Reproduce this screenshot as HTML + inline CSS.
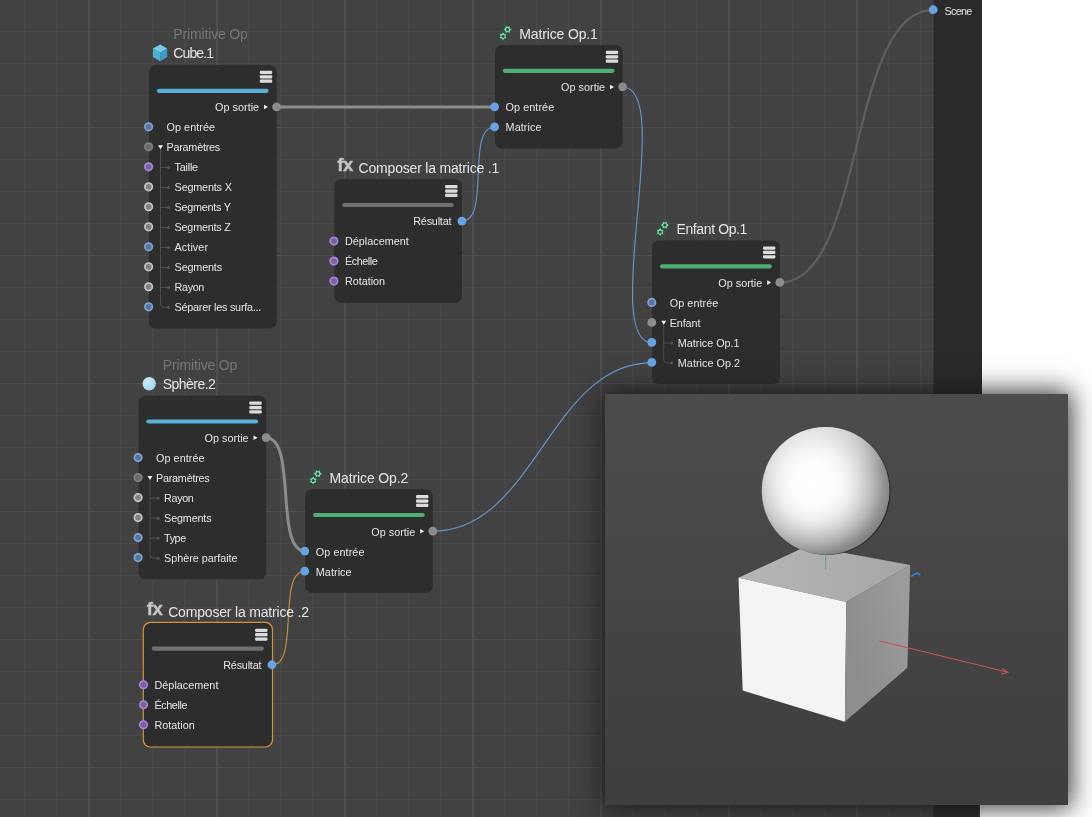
<!DOCTYPE html>
<html lang="fr"><head><meta charset="utf-8"><title>Éditeur de nœuds</title>
<style>
html,body{margin:0;padding:0;background:#fff;}
body{width:1092px;height:817px;position:relative;overflow:hidden;font-family:"Liberation Sans",sans-serif;}
#ed{position:absolute;left:0;top:0;width:940px;height:817px;background-color:#424242;
 background-image:linear-gradient(to right,#4f4f4f 2px,transparent 2px),linear-gradient(to bottom,#505050 1px,#474747 1px,#474747 1.5px,transparent 1.5px),linear-gradient(to right,#484848 2px,transparent 2px),linear-gradient(to bottom,#494949 1px,#444444 1px,#444444 1.5px,transparent 1.5px);
 background-size:128px 128px,128px 128px,32px 32px,32px 32px;background-position:88px 0,0 127px,24px 0,0 31px;}
#tx{position:absolute;left:0;top:0;width:1092px;height:817px;will-change:transform;}
.t{position:absolute;white-space:nowrap;line-height:20px;height:20px;}
svg.ov{position:absolute;left:0;top:0;pointer-events:none;}
#vp{position:absolute;left:605px;top:394px;width:463px;height:411px;
 background:linear-gradient(to bottom,#4c4c4c,#3e3e3e);box-shadow:0 0 24px 3px rgba(20,20,20,0.85);}
</style></head><body>
<div id="ed"></div>
<svg class="ov" width="1092" height="817" viewBox="0 0 1092 817"><defs><radialGradient id="sph" cx="0.4" cy="0.35" r="0.7"><stop offset="0" stop-color="#c9ecf7"/><stop offset="1" stop-color="#9fd6ea"/></radialGradient></defs><rect x="933.6" y="0" width="48.4" height="500" fill="#2a2a2a"/><rect x="933.6" y="500" width="46.3" height="317" fill="#2a2a2a"/><path d="M276.6 107 H495" fill="none" stroke="#8c8c8c" stroke-width="3" stroke-linecap="round"/><path d="M461.9 221.2 C490.9 221.2 465.6 127.0 494.6 127.0" fill="none" stroke="#6698d4" stroke-width="1.1" stroke-linecap="round"/><path d="M622.6 87.0 C675.6 87.0 599.2 342.6 652.2 342.6" fill="none" stroke="#6698d4" stroke-width="1.1" stroke-linecap="round"/><path d="M779.8 282.6 C865.8 282.6 847.2 9.9 933.2 9.9" fill="none" stroke="#5f5f5f" stroke-width="2.2" stroke-linecap="round"/><path d="M266.1 437.7 C297.1 437.7 274.2 551.2 305.2 551.2" fill="none" stroke="#8c8c8c" stroke-width="3" stroke-linecap="round"/><path d="M432.8 531.2 C534.8 531.2 550.2 362.6 652.2 362.6" fill="none" stroke="#6698d4" stroke-width="1.1" stroke-linecap="round"/><path d="M271.9 664.9 C299.9 664.9 276.8 571.2 304.8 571.2" fill="none" stroke="#cf933c" stroke-width="1.1" stroke-linecap="round"/><rect x="149.00" y="65.00" width="127.60" height="263.50" rx="6.8" fill="#2d2d2d"/><rect x="259.80" y="70.80" width="12.4" height="12" rx="1.6" fill="#3e3e3e"/><rect x="259.80" y="70.80" width="12.4" height="3.25" rx="1.1" fill="#dcdcdc"/><rect x="259.80" y="75.17" width="12.4" height="3.25" rx="1.1" fill="#dcdcdc"/><rect x="259.80" y="79.55" width="12.4" height="3.25" rx="1.1" fill="#dcdcdc"/><rect x="156.80" y="88.70" width="111.80" height="4.2" rx="2.1" fill="#57b0d6"/><rect x="495.00" y="45.00" width="127.60" height="103.50" rx="6.8" fill="#2d2d2d"/><rect x="605.80" y="50.80" width="12.4" height="12" rx="1.6" fill="#3e3e3e"/><rect x="605.80" y="50.80" width="12.4" height="3.25" rx="1.1" fill="#dcdcdc"/><rect x="605.80" y="55.17" width="12.4" height="3.25" rx="1.1" fill="#dcdcdc"/><rect x="605.80" y="59.55" width="12.4" height="3.25" rx="1.1" fill="#dcdcdc"/><rect x="502.80" y="68.70" width="111.80" height="4.2" rx="2.1" fill="#4fae72"/><rect x="334.30" y="179.20" width="127.60" height="123.50" rx="6.8" fill="#2d2d2d"/><rect x="445.10" y="185.00" width="12.4" height="12" rx="1.6" fill="#3e3e3e"/><rect x="445.10" y="185.00" width="12.4" height="3.25" rx="1.1" fill="#dcdcdc"/><rect x="445.10" y="189.38" width="12.4" height="3.25" rx="1.1" fill="#dcdcdc"/><rect x="445.10" y="193.75" width="12.4" height="3.25" rx="1.1" fill="#dcdcdc"/><rect x="342.10" y="202.90" width="111.80" height="4.2" rx="2.1" fill="#707070"/><rect x="652.20" y="240.60" width="127.60" height="143.50" rx="6.8" fill="#2d2d2d"/><rect x="763.00" y="246.40" width="12.4" height="12" rx="1.6" fill="#3e3e3e"/><rect x="763.00" y="246.40" width="12.4" height="3.25" rx="1.1" fill="#dcdcdc"/><rect x="763.00" y="250.78" width="12.4" height="3.25" rx="1.1" fill="#dcdcdc"/><rect x="763.00" y="255.15" width="12.4" height="3.25" rx="1.1" fill="#dcdcdc"/><rect x="660.00" y="264.30" width="111.80" height="4.2" rx="2.1" fill="#4fae72"/><rect x="138.50" y="395.70" width="127.60" height="183.50" rx="6.8" fill="#2d2d2d"/><rect x="249.30" y="401.50" width="12.4" height="12" rx="1.6" fill="#3e3e3e"/><rect x="249.30" y="401.50" width="12.4" height="3.25" rx="1.1" fill="#dcdcdc"/><rect x="249.30" y="405.88" width="12.4" height="3.25" rx="1.1" fill="#dcdcdc"/><rect x="249.30" y="410.25" width="12.4" height="3.25" rx="1.1" fill="#dcdcdc"/><rect x="146.30" y="419.40" width="111.80" height="4.2" rx="2.1" fill="#57b0d6"/><rect x="305.20" y="489.20" width="127.60" height="103.50" rx="6.8" fill="#2d2d2d"/><rect x="416.00" y="495.00" width="12.4" height="12" rx="1.6" fill="#3e3e3e"/><rect x="416.00" y="495.00" width="12.4" height="3.25" rx="1.1" fill="#dcdcdc"/><rect x="416.00" y="499.38" width="12.4" height="3.25" rx="1.1" fill="#dcdcdc"/><rect x="416.00" y="503.75" width="12.4" height="3.25" rx="1.1" fill="#dcdcdc"/><rect x="313.00" y="512.90" width="111.80" height="4.2" rx="2.1" fill="#4fae72"/><rect x="142.70" y="621.70" width="130.40" height="125.90" rx="7.6" fill="#d2953c"/><rect x="143.90" y="622.90" width="128.00" height="123.50" rx="6.8" fill="#2d2d2d"/><rect x="255.10" y="628.70" width="12.4" height="12" rx="1.6" fill="#3e3e3e"/><rect x="255.10" y="628.70" width="12.4" height="3.25" rx="1.1" fill="#dcdcdc"/><rect x="255.10" y="633.07" width="12.4" height="3.25" rx="1.1" fill="#dcdcdc"/><rect x="255.10" y="637.45" width="12.4" height="3.25" rx="1.1" fill="#dcdcdc"/><rect x="151.70" y="646.60" width="112.20" height="4.2" rx="2.1" fill="#707070"/><path d="M160.5 149.0 V304.0 M160.5 167.5 H167.5 M160.5 187.5 H167.5 M160.5 207.5 H167.5 M160.5 227.5 H167.5 M160.5 247.5 H167.5 M160.5 267.5 H167.5 M160.5 287.5 H167.5 M160.5 304.0 Q160.5 307.5 164.0 307.5 H167.5" fill="none" stroke="#4d4d4d" stroke-width="1"/><circle cx="168.5" cy="167.5" r="1.5" fill="#565656"/><circle cx="168.5" cy="187.5" r="1.5" fill="#565656"/><circle cx="168.5" cy="207.5" r="1.5" fill="#565656"/><circle cx="168.5" cy="227.5" r="1.5" fill="#565656"/><circle cx="168.5" cy="247.5" r="1.5" fill="#565656"/><circle cx="168.5" cy="267.5" r="1.5" fill="#565656"/><circle cx="168.5" cy="287.5" r="1.5" fill="#565656"/><circle cx="168.5" cy="307.5" r="1.5" fill="#565656"/><path d="M663.7 324.6 V359.6 M663.7 343.1 H670.7 M663.7 359.6 Q663.7 363.1 667.2 363.1 H670.7" fill="none" stroke="#4d4d4d" stroke-width="1"/><circle cx="671.7" cy="343.1" r="1.5" fill="#565656"/><circle cx="671.7" cy="363.1" r="1.5" fill="#565656"/><path d="M150.0 479.7 V554.7 M150.0 498.2 H157.0 M150.0 518.2 H157.0 M150.0 538.2 H157.0 M150.0 554.7 Q150.0 558.2 153.5 558.2 H157.0" fill="none" stroke="#4d4d4d" stroke-width="1"/><circle cx="158.0" cy="498.2" r="1.5" fill="#565656"/><circle cx="158.0" cy="518.2" r="1.5" fill="#565656"/><circle cx="158.0" cy="538.2" r="1.5" fill="#565656"/><circle cx="158.0" cy="558.2" r="1.5" fill="#565656"/><g transform="translate(153.00 44.60)"><path d="M7.1 0 L14.2 4 L7.1 8.2 L0 4 Z" fill="#74cdee"/><path d="M0 4 L7.1 8.2 L7.1 16.6 L0 12.4 Z" fill="#4fb0d6"/><path d="M14.2 4 L7.1 8.2 L7.1 16.6 L14.2 12.4 Z" fill="#3f9cc4"/></g><path d="M512.30 29.50 L510.12 30.96 L509.95 33.57 L507.60 32.41 L505.25 33.57 L505.08 30.96 L502.90 29.50 L505.08 28.04 L505.25 25.43 L507.60 26.59 L509.95 25.43 L510.12 28.04 Z" fill="#93d6b3" stroke="#174f31" stroke-width="0.8" stroke-linejoin="round"/><circle cx="507.60" cy="29.50" r="1.5" fill="#0d5a32"/><path d="M503.00 31.70 L504.43 33.83 L506.98 34.00 L505.85 36.30 L506.98 38.60 L504.43 38.77 L503.00 40.90 L501.57 38.77 L499.02 38.60 L500.15 36.30 L499.02 34.00 L501.57 33.83 Z" fill="#93d6b3" stroke="#174f31" stroke-width="0.8" stroke-linejoin="round"/><circle cx="503.00" cy="36.30" r="1.5" fill="#0d5a32"/><path d="M669.50 225.10 L667.32 226.56 L667.15 229.17 L664.80 228.01 L662.45 229.17 L662.28 226.56 L660.10 225.10 L662.28 223.64 L662.45 221.03 L664.80 222.19 L667.15 221.03 L667.32 223.64 Z" fill="#93d6b3" stroke="#174f31" stroke-width="0.8" stroke-linejoin="round"/><circle cx="664.80" cy="225.10" r="1.5" fill="#0d5a32"/><path d="M660.20 227.30 L661.63 229.43 L664.18 229.60 L663.05 231.90 L664.18 234.20 L661.63 234.37 L660.20 236.50 L658.77 234.37 L656.22 234.20 L657.35 231.90 L656.22 229.60 L658.77 229.43 Z" fill="#93d6b3" stroke="#174f31" stroke-width="0.8" stroke-linejoin="round"/><circle cx="660.20" cy="231.90" r="1.5" fill="#0d5a32"/><circle cx="149.20" cy="383.70" r="6.7" fill="url(#sph)"/><path d="M322.50 473.70 L320.32 475.16 L320.15 477.77 L317.80 476.61 L315.45 477.77 L315.28 475.16 L313.10 473.70 L315.28 472.24 L315.45 469.63 L317.80 470.79 L320.15 469.63 L320.32 472.24 Z" fill="#93d6b3" stroke="#174f31" stroke-width="0.8" stroke-linejoin="round"/><circle cx="317.80" cy="473.70" r="1.5" fill="#0d5a32"/><path d="M313.20 475.90 L314.63 478.03 L317.18 478.20 L316.05 480.50 L317.18 482.80 L314.63 482.97 L313.20 485.10 L311.77 482.97 L309.22 482.80 L310.35 480.50 L309.22 478.20 L311.77 478.03 Z" fill="#93d6b3" stroke="#174f31" stroke-width="0.8" stroke-linejoin="round"/><circle cx="313.20" cy="480.50" r="1.5" fill="#0d5a32"/><circle cx="276.60" cy="106.85" r="4.4" fill="#8c8c8c"/><path d="M264.00 104.70 L268.00 107.00 L264.00 109.30 Z" fill="#f4f4f4"/><circle cx="148.60" cy="126.85" r="3.75" fill="#53759f" stroke="#7fa4d3" stroke-width="1.7"/><circle cx="148.60" cy="146.85" r="3.75" fill="#6a6a6a" stroke="#808080" stroke-width="1.7"/><path d="M158.00 145.20 L163.00 145.20 L160.50 149.20 Z" fill="#f4f4f4"/><circle cx="148.60" cy="166.85" r="3.75" fill="#7b6296" stroke="#a685e2" stroke-width="1.7"/><circle cx="148.60" cy="186.85" r="3.75" fill="#818181" stroke="#c6c6c6" stroke-width="1.7"/><circle cx="148.60" cy="206.85" r="3.75" fill="#818181" stroke="#c6c6c6" stroke-width="1.7"/><circle cx="148.60" cy="226.85" r="3.75" fill="#818181" stroke="#c6c6c6" stroke-width="1.7"/><circle cx="148.60" cy="246.85" r="3.75" fill="#53759f" stroke="#7fa4d3" stroke-width="1.7"/><circle cx="148.60" cy="266.85" r="3.75" fill="#818181" stroke="#c6c6c6" stroke-width="1.7"/><circle cx="148.60" cy="286.85" r="3.75" fill="#818181" stroke="#c6c6c6" stroke-width="1.7"/><circle cx="148.60" cy="306.85" r="3.75" fill="#53759f" stroke="#7fa4d3" stroke-width="1.7"/><circle cx="622.60" cy="86.85" r="4.4" fill="#8c8c8c"/><path d="M610.00 84.70 L614.00 87.00 L610.00 89.30 Z" fill="#f4f4f4"/><circle cx="494.60" cy="106.85" r="4.4" fill="#67a3e3"/><circle cx="494.60" cy="126.85" r="4.4" fill="#67a3e3"/><circle cx="461.90" cy="221.05" r="4.4" fill="#67a3e3"/><circle cx="333.90" cy="241.05" r="3.75" fill="#7b6296" stroke="#a685e2" stroke-width="1.7"/><circle cx="333.90" cy="261.05" r="3.75" fill="#7b6296" stroke="#a685e2" stroke-width="1.7"/><circle cx="333.90" cy="281.05" r="3.75" fill="#7b6296" stroke="#a685e2" stroke-width="1.7"/><circle cx="779.80" cy="282.45" r="4.4" fill="#8c8c8c"/><path d="M767.20 280.30 L771.20 282.60 L767.20 284.90 Z" fill="#f4f4f4"/><circle cx="651.80" cy="302.45" r="3.75" fill="#53759f" stroke="#7fa4d3" stroke-width="1.7"/><circle cx="651.80" cy="322.45" r="4.4" fill="#8c8c8c"/><path d="M661.20 320.80 L666.20 320.80 L663.70 324.80 Z" fill="#f4f4f4"/><circle cx="651.80" cy="342.45" r="4.4" fill="#67a3e3"/><circle cx="651.80" cy="362.45" r="4.4" fill="#67a3e3"/><circle cx="266.10" cy="437.55" r="4.4" fill="#8c8c8c"/><path d="M253.50 435.40 L257.50 437.70 L253.50 440.00 Z" fill="#f4f4f4"/><circle cx="138.10" cy="457.55" r="3.75" fill="#53759f" stroke="#7fa4d3" stroke-width="1.7"/><circle cx="138.10" cy="477.55" r="3.75" fill="#6a6a6a" stroke="#808080" stroke-width="1.7"/><path d="M147.50 475.90 L152.50 475.90 L150.00 479.90 Z" fill="#f4f4f4"/><circle cx="138.10" cy="497.55" r="3.75" fill="#818181" stroke="#c6c6c6" stroke-width="1.7"/><circle cx="138.10" cy="517.55" r="3.75" fill="#818181" stroke="#c6c6c6" stroke-width="1.7"/><circle cx="138.10" cy="537.55" r="3.75" fill="#53759f" stroke="#7fa4d3" stroke-width="1.7"/><circle cx="138.10" cy="557.55" r="3.75" fill="#53759f" stroke="#7fa4d3" stroke-width="1.7"/><circle cx="432.80" cy="531.05" r="4.4" fill="#8c8c8c"/><path d="M420.20 528.90 L424.20 531.20 L420.20 533.50 Z" fill="#f4f4f4"/><circle cx="304.80" cy="551.05" r="4.4" fill="#67a3e3"/><circle cx="304.80" cy="571.05" r="4.4" fill="#67a3e3"/><circle cx="271.90" cy="664.75" r="4.4" fill="#67a3e3"/><circle cx="143.50" cy="684.75" r="3.75" fill="#7b6296" stroke="#a685e2" stroke-width="1.7"/><circle cx="143.50" cy="704.75" r="3.75" fill="#7b6296" stroke="#a685e2" stroke-width="1.7"/><circle cx="143.50" cy="724.75" r="3.75" fill="#7b6296" stroke="#a685e2" stroke-width="1.7"/><circle cx="933.20" cy="9.75" r="4.4" fill="#67a3e3"/></svg>
<div id="tx"><span class="t" id="t0" style="font-size:14px;color:#e6e6e6;left:173.30px;top:43.15px;letter-spacing:-0.891px;">Cube.1</span>
<span class="t" id="t1" style="font-size:14px;color:#767676;left:173.30px;top:24.15px;letter-spacing:-0.149px;">Primitive Op</span>
<span class="t" id="t2" style="font-size:10.8px;color:#e6e6e6;right:832.90px;top:97.26px;letter-spacing:0.023px;margin-right:-0.023px;">Op sortie</span>
<span class="t" id="t3" style="font-size:10.8px;color:#e6e6e6;left:166.50px;top:117.26px;letter-spacing:0.071px;">Op entrée</span>
<span class="t" id="t4" style="font-size:10.8px;color:#e6e6e6;left:166.50px;top:137.26px;letter-spacing:-0.235px;">Paramètres</span>
<span class="t" id="t5" style="font-size:10.8px;color:#e6e6e6;left:174.60px;top:157.26px;letter-spacing:-0.222px;">Taille</span>
<span class="t" id="t6" style="font-size:10.8px;color:#e6e6e6;left:174.60px;top:177.26px;letter-spacing:-0.170px;">Segments X</span>
<span class="t" id="t7" style="font-size:10.8px;color:#e6e6e6;left:174.60px;top:197.26px;letter-spacing:-0.258px;">Segments Y</span>
<span class="t" id="t8" style="font-size:10.8px;color:#e6e6e6;left:174.60px;top:217.26px;letter-spacing:-0.213px;">Segments Z</span>
<span class="t" id="t9" style="font-size:10.8px;color:#e6e6e6;left:174.60px;top:237.26px;letter-spacing:0.067px;">Activer</span>
<span class="t" id="t10" style="font-size:10.8px;color:#e6e6e6;left:174.60px;top:257.26px;letter-spacing:-0.161px;">Segments</span>
<span class="t" id="t11" style="font-size:10.8px;color:#e6e6e6;left:174.60px;top:277.26px;letter-spacing:-0.380px;">Rayon</span>
<span class="t" id="t12" style="font-size:10.8px;color:#e6e6e6;left:174.60px;top:297.26px;letter-spacing:-0.238px;">Séparer les surfa...</span>
<span class="t" id="t13" style="font-size:14px;color:#e6e6e6;left:519.30px;top:24.15px;letter-spacing:-0.140px;">Matrice Op.1</span>
<span class="t" id="t14" style="font-size:10.8px;color:#e6e6e6;right:486.90px;top:77.26px;letter-spacing:0.023px;margin-right:-0.023px;">Op sortie</span>
<span class="t" id="t15" style="font-size:10.8px;color:#e6e6e6;left:505.60px;top:97.26px;letter-spacing:0.071px;">Op entrée</span>
<span class="t" id="t16" style="font-size:10.8px;color:#e6e6e6;left:505.60px;top:117.26px;letter-spacing:0.066px;">Matrice</span>
<span class="t" id="t17" style="font-size:14px;color:#e6e6e6;left:358.60px;top:158.15px;letter-spacing:-0.196px;">Composer la matrice .1</span>
<span class="t" id="t18" style="font-size:18.5px;color:#c4c4c4;left:337.20px;top:154.59px;font-weight:bold;-webkit-text-stroke:0.4px #c4c4c4;letter-spacing:-0.453px;">fx</span>
<span class="t" id="t19" style="font-size:10.8px;color:#e6e6e6;right:640.50px;top:211.26px;letter-spacing:-0.187px;margin-right:0.187px;">Résultat</span>
<span class="t" id="t20" style="font-size:10.8px;color:#e6e6e6;left:344.90px;top:231.26px;letter-spacing:0.027px;">Déplacement</span>
<span class="t" id="t21" style="font-size:10.8px;color:#e6e6e6;left:344.90px;top:251.26px;letter-spacing:-0.420px;">Échelle</span>
<span class="t" id="t22" style="font-size:10.8px;color:#e6e6e6;left:344.90px;top:271.26px;letter-spacing:-0.003px;">Rotation</span>
<span class="t" id="t23" style="font-size:14px;color:#e6e6e6;left:676.50px;top:219.15px;letter-spacing:-0.382px;">Enfant Op.1</span>
<span class="t" id="t24" style="font-size:10.8px;color:#e6e6e6;right:329.70px;top:273.26px;letter-spacing:0.023px;margin-right:-0.023px;">Op sortie</span>
<span class="t" id="t25" style="font-size:10.8px;color:#e6e6e6;left:669.70px;top:293.26px;letter-spacing:0.071px;">Op entrée</span>
<span class="t" id="t26" style="font-size:10.8px;color:#e6e6e6;left:669.70px;top:313.26px;letter-spacing:-0.104px;">Enfant</span>
<span class="t" id="t27" style="font-size:10.8px;color:#e6e6e6;left:677.80px;top:333.26px;letter-spacing:-0.001px;">Matrice Op.1</span>
<span class="t" id="t28" style="font-size:10.8px;color:#e6e6e6;left:677.80px;top:353.26px;letter-spacing:0.044px;">Matrice Op.2</span>
<span class="t" id="t29" style="font-size:14px;color:#e6e6e6;left:162.80px;top:374.15px;letter-spacing:-0.533px;">Sphère.2</span>
<span class="t" id="t30" style="font-size:14px;color:#767676;left:162.80px;top:355.15px;letter-spacing:-0.149px;">Primitive Op</span>
<span class="t" id="t31" style="font-size:10.8px;color:#e6e6e6;right:843.40px;top:428.26px;letter-spacing:0.023px;margin-right:-0.023px;">Op sortie</span>
<span class="t" id="t32" style="font-size:10.8px;color:#e6e6e6;left:156.00px;top:448.26px;letter-spacing:0.071px;">Op entrée</span>
<span class="t" id="t33" style="font-size:10.8px;color:#e6e6e6;left:156.00px;top:468.26px;letter-spacing:-0.235px;">Paramètres</span>
<span class="t" id="t34" style="font-size:10.8px;color:#e6e6e6;left:164.10px;top:488.26px;letter-spacing:-0.380px;">Rayon</span>
<span class="t" id="t35" style="font-size:10.8px;color:#e6e6e6;left:164.10px;top:508.26px;letter-spacing:-0.161px;">Segments</span>
<span class="t" id="t36" style="font-size:10.8px;color:#e6e6e6;left:164.10px;top:528.26px;letter-spacing:-0.441px;">Type</span>
<span class="t" id="t37" style="font-size:10.8px;color:#e6e6e6;left:164.10px;top:548.26px;letter-spacing:-0.023px;">Sphère parfaite</span>
<span class="t" id="t38" style="font-size:14px;color:#e6e6e6;left:329.50px;top:468.15px;letter-spacing:-0.122px;">Matrice Op.2</span>
<span class="t" id="t39" style="font-size:10.8px;color:#e6e6e6;right:676.70px;top:522.26px;letter-spacing:0.023px;margin-right:-0.023px;">Op sortie</span>
<span class="t" id="t40" style="font-size:10.8px;color:#e6e6e6;left:315.80px;top:542.26px;letter-spacing:0.071px;">Op entrée</span>
<span class="t" id="t41" style="font-size:10.8px;color:#e6e6e6;left:315.80px;top:562.26px;letter-spacing:0.066px;">Matrice</span>
<span class="t" id="t42" style="font-size:14px;color:#e6e6e6;left:168.20px;top:602.15px;letter-spacing:-0.182px;">Composer la matrice .2</span>
<span class="t" id="t43" style="font-size:18.5px;color:#c4c4c4;left:146.80px;top:598.59px;font-weight:bold;-webkit-text-stroke:0.4px #c4c4c4;letter-spacing:-0.453px;">fx</span>
<span class="t" id="t44" style="font-size:10.8px;color:#e6e6e6;right:830.50px;top:655.26px;letter-spacing:-0.187px;margin-right:0.187px;">Résultat</span>
<span class="t" id="t45" style="font-size:10.8px;color:#e6e6e6;left:154.50px;top:675.26px;letter-spacing:0.027px;">Déplacement</span>
<span class="t" id="t46" style="font-size:10.8px;color:#e6e6e6;left:154.50px;top:695.26px;letter-spacing:-0.420px;">Échelle</span>
<span class="t" id="t47" style="font-size:10.8px;color:#e6e6e6;left:154.50px;top:715.26px;letter-spacing:-0.003px;">Rotation</span>
<span class="t" id="t48" style="font-size:10.8px;color:#e6e6e6;left:944.40px;top:1.26px;letter-spacing:-0.681px;">Scene</span></div>
<div id="vp"></div>

<svg class="ov" width="1092" height="817" viewBox="0 0 1092 817">
<defs>
<radialGradient id="sg" gradientUnits="userSpaceOnUse" cx="814" cy="484" r="80" fx="814" fy="484">
<stop offset="0" stop-color="#ffffff"/><stop offset="0.26" stop-color="#fdfdfd"/><stop offset="0.45" stop-color="#efefef"/>
<stop offset="0.6" stop-color="#d6d6d6"/><stop offset="0.74" stop-color="#b8b8b8"/><stop offset="0.875" stop-color="#939393"/><stop offset="1" stop-color="#7c7c7c"/>
</radialGradient>
<linearGradient id="sl" gradientUnits="userSpaceOnUse" x1="810" y1="427" x2="830" y2="555">
<stop offset="0" stop-color="#fff" stop-opacity="0.55"/><stop offset="0.4" stop-color="#fff" stop-opacity="0"/><stop offset="0.75" stop-color="#000" stop-opacity="0"/><stop offset="1" stop-color="#000" stop-opacity="0.06"/>
</linearGradient>
<linearGradient id="ct" gradientUnits="userSpaceOnUse" x1="740" y1="575" x2="910" y2="575"><stop offset="0" stop-color="#b6b6b6"/><stop offset="1" stop-color="#a6a6a6"/></linearGradient>
<linearGradient id="cr" gradientUnits="userSpaceOnUse" x1="846" y1="640" x2="910" y2="620"><stop offset="0" stop-color="#8d8d8d"/><stop offset="1" stop-color="#9b9b9b"/></linearGradient>
</defs>
<!-- cube -->
<path d="M738.5 577.8 L807 546 L910.2 565 L846.3 601.9 Z" fill="url(#ct)"/>
<path d="M738.5 577.8 L846.3 601.9 L844.9 721.7 L742.7 690.5 Z" fill="#f4f4f4"/>
<path d="M846.3 601.9 L910.2 565 L907.4 667.8 L844.9 721.7 Z" fill="url(#cr)"/>
<!-- sphere -->
<circle cx="827.0" cy="491.3" r="63.6" fill="#262626"/>
<circle cx="825.6" cy="490.8" r="63.9" fill="url(#sg)"/><circle cx="825.6" cy="490.8" r="63.9" fill="url(#sl)"/>
<!-- axes -->
<path d="M825.6 555.6 V569.8" stroke="#4caf70" stroke-width="1"/>
<path d="M879 640.8 L1008 672.3 M1002 668.4 L1008 672.3 L1001.2 674.2" stroke="#c85252" stroke-width="1.1" fill="none"/>
<path d="M911 576.5 L916.5 573.2 L920.5 574.8" stroke="#3a80d2" stroke-width="1.6" fill="none"/>
</svg>

</body></html>
